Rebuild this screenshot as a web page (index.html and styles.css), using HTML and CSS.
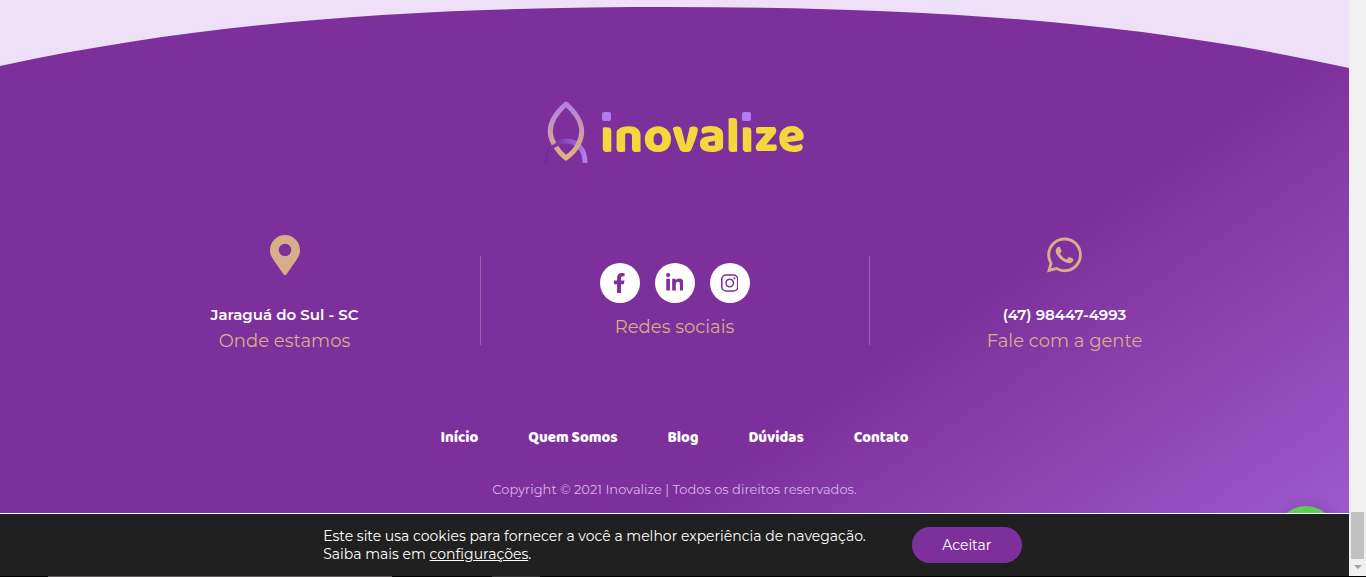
FILE: index.html
```
<!DOCTYPE html>
<html lang="pt-BR">
<head>
<meta charset="utf-8">
<title>Inovalize</title>
<link rel="stylesheet" href="styles.css">
</head>
<body>
<div class="page">
  <footer class="footer">
    <svg class="curve" viewBox="0 0 1349 70" preserveAspectRatio="none" aria-hidden="true">
      <path fill="#ede0f8" d="M0 0H1349V68C1125 18 900 7 670 7C450 7 225 17 0 66Z"/>
    </svg>
    <a class="logo" href="#">
      <svg class="symbol" width="44" height="68" viewBox="2 0 44 68" fill="none" stroke-width="5" aria-hidden="true">
        <defs>
          <linearGradient id="leaf" x1="0" y1="0" x2="0" y2="1"><stop offset="0" stop-color="#b580e4"/><stop offset=".7" stop-color="#d3a696"/><stop offset="1" stop-color="#dcb384"/></linearGradient>
          <linearGradient id="arc" x1="0" y1="0" x2="1" y2="0"><stop offset="0" stop-color="#752c98"/><stop offset=".4" stop-color="#8340b4"/><stop offset="1" stop-color="#b27cf0"/></linearGradient>
        </defs>
        <path stroke="url(#arc)" d="M5 64C5 50 13 42 24 42S43 50 43 64"/>
        <path stroke="url(#leaf)" stroke-linejoin="round" d="M12 45C5 33 7 20 24 5C41 20 43 33 36 46C33 52 28 56 24 59C20 56 17 53 14 48"/>
      </svg>
      <span class="wordmark"><span class="letter-i">i</span>noval<span class="letter-i">i</span>ze</span>
    </a>
    <div class="contacts">
      <section class="contact">
        <svg class="pin" viewBox="0 0 384 512" fill="currentColor" aria-hidden="true"><path d="M172 502C27 291 0 270 0 192a192 192 0 1 1 384 0c0 78-27 99-172 310a24 24 0 0 1-40 0zM192 272a80 80 0 1 0 0-160 80 80 0 0 0 0 160z"/></svg>
        <h2>Jaraguá do Sul - SC</h2>
        <p>Onde estamos</p>
      </section>
      <section class="contact social">
        <div class="networks">
          <a href="#" aria-label="Facebook"><svg viewBox="0 0 320 512" fill="currentColor"><path d="M279 288l14-93h-89v-60c0-25 12-50 52-50h41V7s-37-7-72-7c-73 0-121 44-121 125v70H23v93h81v224h100V288z"/></svg></a>
          <a href="#" aria-label="LinkedIn"><svg viewBox="0 0 448 512" fill="currentColor"><path d="M100 448H7V149h93zM54 108a54 54 0 1 1 0-108 54 54 0 0 1 0 108zM448 448h-93V302c0-34-1-79-48-79-49 0-56 38-56 77v148h-93V149h89v41h1c13-24 43-48 88-48 94 0 112 62 112 142z"/></svg></a>
          <a href="#" aria-label="Instagram"><svg viewBox="0 0 448 512" fill="none" stroke="currentColor" stroke-width="40"><rect x="20" y="52" width="408" height="408" rx="110"/><circle cx="224" cy="256" r="95"/><circle cx="343" cy="137" r="27" fill="currentColor" stroke="none"/></svg></a>
        </div>
        <p>Redes sociais</p>
      </section>
      <section class="contact">
        <svg class="whats" viewBox="0 0 448 512" fill="currentColor" aria-hidden="true"><path d="M381 97A222 222 0 0 0 32 365L0 480l118-31A222 222 0 0 0 381 97zM224 439c-33 0-66-9-94-26l-7-4-70 18 19-68-4-7A185 185 0 1 1 224 439zm101-138c-6-3-33-16-38-18s-9-3-12 3-14 18-18 22-6 4-12 1c-33-16-54-29-76-66-6-10 6-9 16-31 2-4 1-7 0-10s-12-30-17-41c-5-11-9-9-12-9h-11a20 20 0 0 0-15 7c-5 5-19 19-19 46s20 54 23 58 39 60 95 84c35 15 49 17 67 14 11-2 33-14 37-27s5-24 4-26-5-4-12-7z"/></svg>
        <h2>(47) 98447-4993</h2>
        <p>Fale com a gente</p>
      </section>
    </div>
    <nav class="menu">
      <a href="#">Início</a><a href="#">Quem Somos</a><a href="#">Blog</a><a href="#">Dúvidas</a><a href="#">Contato</a>
    </nav>
    <p class="copyright">Copyright © 2021 Inovalize | Todos os direitos reservados.</p>
    <a class="chat" href="#" aria-label="WhatsApp"></a>
  </footer>
  <aside class="cookies">
    <p>Este site usa cookies para fornecer a você a melhor experiência de navegação.<br>Saiba mais em <a href="#">configurações</a>.</p>
    <button type="button">Aceitar</button>
  </aside>
</div>
<div class="scrollbar" aria-hidden="true"><span class="thumb"></span><span class="arrow"></span></div>
<div class="edge" aria-hidden="true"></div>
</body>
</html>
```
FILE: styles.css
```
* { box-sizing: border-box; }
body {
  margin: 0;
  min-height: 100vh;
  display: grid;
  grid-template: 1fr 1px / 1fr 17px;
  font-family: Montserrat, Inter, sans-serif;
  color: #fff;
}
h2, p { margin: 0; }
a { color: inherit; }
.page { display: flex; flex-direction: column; }
.footer {
  position: relative;
  flex: 1;
  overflow: hidden;
  display: flex;
  flex-direction: column;
  align-items: center;
  background: linear-gradient(145deg, #7d309b 67%, #9d59cc 100%);
}
.curve { display: block; width: 100%; height: 70px; }
.logo {
  display: flex;
  gap: 12px;
  margin-top: 29px;
  height: 68px;
  text-decoration: none;
}
.wordmark {
  font: 800 50px/76px "Baloo 2", Baloo, Lato, sans-serif;
  color: #f3d73c;
}
/* the stem keeps the text colour, the round dot gives way to a square one */
.letter-i {
  position: relative;
  display: inline-block;
  background: linear-gradient(transparent 27px, #f3d73c 27px);
  -webkit-background-clip: text;
  background-clip: text;
  color: transparent;
}
.letter-i::before {
  content: "";
  position: absolute;
  top: 13px;
  left: calc(50% - 5px);
  width: 9px;
  height: 9px;
  border-radius: 2px;
  background: #b27cf0;
}
.contacts {
  width: 100%;
  max-width: 1170px;
  margin-top: 66px;
  display: grid;
  grid-template-columns: repeat(3, 1fr);
  color: #d8ad8a;
}
.contact {
  display: flex;
  flex-direction: column;
  align-items: center;
}
.pin, .whats { height: 40px; margin: 2px 0 30px; }
.contact h2 { font-size: 15px; line-height: 20px; font-weight: 600; color: #fff; }
.contact p { font-size: 18px; line-height: 26px; margin-top: 3px; font-weight: 400; }
.social {
  align-self: start;
  height: 89px;
  margin-top: 23px;
  padding-top: 7px;
  border: solid #9b5fb4;
  border-width: 0 1px;
}
.networks { display: flex; gap: 15px; margin-bottom: 8px; }
.networks a {
  display: grid;
  place-items: center;
  width: 40px;
  height: 40px;
  border-radius: 50%;
  background: #fff;
  color: #7d309b;
}
.networks svg { height: 20px; }
.menu {
  display: flex;
  gap: 50px;
  margin-top: 74px;
  font: 800 15px/20px "Baloo 2", Baloo, Lato, sans-serif;
}
.menu a { text-decoration: none; }
.copyright {
  margin-top: 31px;
  font-size: 13px;
  line-height: 20px;
  font-weight: 400;
  color: #d6b3ea;
}
.chat {
  position: absolute;
  right: 13px;
  bottom: -53px;
  width: 60px;
  height: 60px;
  border-radius: 50%;
  background: #60cc55;
  box-shadow: 2px 2px 14px rgba(60, 30, 100, .3);
}
.cookies {
  display: flex;
  justify-content: center;
  align-items: center;
  gap: 46px;
  padding-right: 4px;
  height: 63px;
  border-top: 1px solid #fff;
  background: #202020;
  font-size: 14px;
  line-height: 18px;
}
.cookies button {
  width: 110px;
  height: 36px;
  border: 0;
  border-radius: 18px;
  background: #7d309b;
  color: #fff;
  font: inherit;
}
.scrollbar {
  display: flex;
  flex-direction: column;
  justify-content: flex-end;
  align-items: center;
  gap: 6px;
  padding-bottom: 7px;
  background: #f0f0f0;
}
.thumb { width: 13px; height: 47px; background: #c1c1c1; }
.arrow { border: 4px solid transparent; border-top-color: #a0a0a0; border-bottom: 0; }
.edge {
  grid-column: 1 / -1;
  background: linear-gradient(90deg, #000 48px, #605c5e 48px 392px, #000 392px 492px, #333 492px 540px, #000 540px);
}
```
